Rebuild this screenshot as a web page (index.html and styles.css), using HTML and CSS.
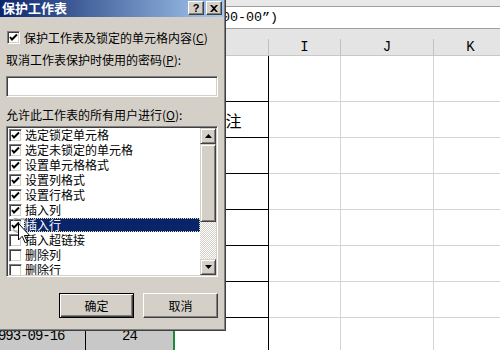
FILE: index.html
```html
<!DOCTYPE html>
<html lang="zh-CN">
<head>
    <meta charset="UTF-8">
    <title>保护工作表</title>
    <link rel="stylesheet" href="styles.css">
</head>
<body>
    <!-- Spreadsheet behind the dialog -->
    <div class="sheet">
        <div class="band"></div>
        <div class="formula">=TEXT(A2,"0000-00-00”)</div>
        <div class="grid">
            <div class="hd"><span>A</span></div>
            <div class="hd"><span>B</span></div>
            <div class="hd"><span>H</span></div>
            <div class="hd"><span>I</span></div>
            <div class="hd"><span>J</span></div>
            <div class="hd"><span>K</span></div>

            <div class="cell"></div><div class="cell"></div><div class="cell hb"></div>
            <div class="cell"></div><div class="cell"></div><div class="cell"></div>

            <div class="cell"></div><div class="cell"></div><div class="cell hb note">备注</div>
            <div class="cell"></div><div class="cell"></div><div class="cell"></div>

            <div class="cell"></div><div class="cell"></div><div class="cell hb"></div>
            <div class="cell"></div><div class="cell"></div><div class="cell"></div>

            <div class="cell"></div><div class="cell"></div><div class="cell hb"></div>
            <div class="cell"></div><div class="cell"></div><div class="cell"></div>

            <div class="cell"></div><div class="cell"></div><div class="cell hb"></div>
            <div class="cell"></div><div class="cell"></div><div class="cell"></div>

            <div class="cell"></div><div class="cell"></div><div class="cell hb"></div>
            <div class="cell"></div><div class="cell"></div><div class="cell"></div>

            <div class="cell"></div><div class="cell"></div><div class="cell hb"></div>
            <div class="cell"></div><div class="cell"></div><div class="cell"></div>

            <div class="cell fill date">1993-09-16</div><div class="cell fill num sel">24</div><div class="cell hb"></div>
            <div class="cell"></div><div class="cell"></div><div class="cell"></div>
        </div>
    </div>

    <!-- Protect sheet dialog -->
    <div class="dialog">
        <div class="titlebar">
            <span class="title">保护工作表</span>
            <span class="tbtn help">?</span>
            <span class="tbtn close">
                <svg width="8" height="7" viewBox="0 0 8 7"><path d="M0 0h2l2 2 2-2h2L5 3.5 8 7H6L4 5 2 7H0l3-3.5z" fill="#000"/></svg>
            </span>
        </div>
        <div class="body">
            <div class="row first">
                <span class="chk"><svg width="9" height="9" viewBox="0 0 9 9"><polyline points="1,4 3,6.5 8,1.5" fill="none" stroke="#000" stroke-width="2"/></svg></span>
                <span>保护工作表及锁定的单元格内容(<u>C</u>)</span>
            </div>
            <div class="label">取消工作表保护时使用的密码(<u>P</u>):</div>
            <div class="input"></div>
            <div class="label allow">允许此工作表的所有用户进行(<u>O</u>):</div>
            <div class="list">
                <div class="items">
                    <div class="item"><span class="chk"><svg width="9" height="9" viewBox="0 0 9 9"><polyline points="1,4 3,6.5 8,1.5" fill="none" stroke="#000" stroke-width="2"/></svg></span><span class="txt">选定锁定单元格</span></div>
                    <div class="item"><span class="chk"><svg width="9" height="9" viewBox="0 0 9 9"><polyline points="1,4 3,6.5 8,1.5" fill="none" stroke="#000" stroke-width="2"/></svg></span><span class="txt">选定未锁定的单元格</span></div>
                    <div class="item"><span class="chk"><svg width="9" height="9" viewBox="0 0 9 9"><polyline points="1,4 3,6.5 8,1.5" fill="none" stroke="#000" stroke-width="2"/></svg></span><span class="txt">设置单元格格式</span></div>
                    <div class="item"><span class="chk"><svg width="9" height="9" viewBox="0 0 9 9"><polyline points="1,4 3,6.5 8,1.5" fill="none" stroke="#000" stroke-width="2"/></svg></span><span class="txt">设置列格式</span></div>
                    <div class="item"><span class="chk"><svg width="9" height="9" viewBox="0 0 9 9"><polyline points="1,4 3,6.5 8,1.5" fill="none" stroke="#000" stroke-width="2"/></svg></span><span class="txt">设置行格式</span></div>
                    <div class="item"><span class="chk"><svg width="9" height="9" viewBox="0 0 9 9"><polyline points="1,4 3,6.5 8,1.5" fill="none" stroke="#000" stroke-width="2"/></svg></span><span class="txt">插入列</span></div>
                    <div class="item"><span class="chk"><svg width="9" height="9" viewBox="0 0 9 9"><polyline points="1,4 3,6.5 8,1.5" fill="none" stroke="#000" stroke-width="2"/></svg></span><span class="txt selected">插入行</span></div>
                    <div class="item"><span class="chk"></span><span class="txt">插入超链接</span></div>
                    <div class="item"><span class="chk"></span><span class="txt">删除列</span></div>
                    <div class="item"><span class="chk"></span><span class="txt">删除行</span></div>
                </div>
                <div class="scrollbar">
                    <div class="sbtn"><svg width="7" height="4" viewBox="0 0 7 4"><path d="M3.5 0L7 4H0z" fill="#000"/></svg></div>
                    <div class="thumb"></div>
                    <div class="track"></div>
                    <div class="sbtn"><svg width="7" height="4" viewBox="0 0 7 4"><path d="M0 0h7L3.5 4z" fill="#000"/></svg></div>
                </div>
            </div>
            <div class="buttons">
                <button class="btn default">确定</button>
                <button class="btn">取消</button>
            </div>
        </div>
    </div>

    <!-- mouse pointer with click ring -->
    <svg class="cursor" width="24" height="32" viewBox="0 0 24 32">
        <circle cx="6" cy="7" r="7.5" fill="none" stroke="#a8a8a8" stroke-width="1.5"/>
        <path d="M5.5 5.5V22l3.7-3.7 3 6.5 2.2-1-3-6.3h5.3z" fill="#fff" stroke="#000" stroke-width="1"/>
    </svg>
</body>
</html>
```

FILE: styles.css
```css
body {
    margin: 0;
    width: 500px;
    height: 350px;
    overflow: hidden;
    position: relative;
    background-color: #fff;
    font-family: "Noto Sans CJK SC", sans-serif;
}

/* ---------- spreadsheet ---------- */

.band {
    height: 6px;
    background-color: #e8e8e8;
    border-bottom: 1px solid #a0a0a0;
}

.formula {
    height: 21px;
    line-height: 21px;
    padding-left: 102px;
    border-bottom: 1px solid #a0a0a0;
    font-family: "Liberation Mono", monospace;
    font-size: 13.33px;
    white-space: nowrap;
}

.grid {
    display: grid;
    margin-left: -30px;
    width: 538px;
    grid-template-columns: 116px 89px 94px 72px 93px 74px;
    grid-template-rows: 27px 46px repeat(7, 36px);
}

.hd {
    background-color: #e4e4e4;
    padding-top: 10px;
    box-sizing: border-box;
    border-bottom: 1px solid #c8c8c8;
}

.hd span {
    display: block;
    height: 16px;
    line-height: 16px;
    text-align: center;
    border-right: 1px solid #c0c0c0;
    font-family: "Liberation Mono", monospace;
    font-size: 14px;
}

.cell {
    box-sizing: border-box;
    border-right: 1px solid #d4d4d4;
    border-bottom: 1px solid #d4d4d4;
    display: flex;
    align-items: center;
    justify-content: center;
}

.cell.hb {
    border-right: 1px solid #000;
    border-bottom: 1px solid #000;
}

.note {
    font-size: 16px;
    padding-left: 8px;
}

.fill {
    background-color: #c8c8c8;
}

.date, .num {
    font-family: "Liberation Mono", monospace;
    font-size: 14px;
    letter-spacing: -1px;
}

.date {
    border-right: 1px solid #000;
}

.sel {
    border-right: 2px solid #1e8a3c;
}

/* ---------- dialog ---------- */

.dialog {
    position: absolute;
    left: -3px;
    top: -3px;
    width: 229px;
    height: 334px;
    box-sizing: border-box;
    padding: 1px;
    background-color: #d4d0c8;
    border: 1px solid;
    border-color: #d4d0c8 #404040 #404040 #d4d0c8;
    box-shadow: inset 1px 1px #fff, inset -1px -1px #808080;
    font-size: 12px;
    color: #000;
}

.titlebar {
    display: flex;
    align-items: center;
    height: 18px;
    padding: 0 2px 0 3px;
    background: linear-gradient(to right, #0a246a, #a6caf0);
}

.title {
    flex: 1;
    color: #fff;
    font-weight: bold;
    font-size: 13px;
    line-height: 18px;
}

.tbtn {
    width: 16px;
    height: 14px;
    box-sizing: border-box;
    display: flex;
    align-items: center;
    justify-content: center;
    background-color: #d4d0c8;
    border: 1px solid;
    border-color: #fff #404040 #404040 #fff;
    box-shadow: inset -1px -1px #808080;
    font-family: "Liberation Sans", sans-serif;
    font-weight: bold;
    font-size: 11px;
    line-height: 12px;
}

.help {
    margin-right: 2px;
}

.body {
    padding: 0 6px 0 7px;
}

.row {
    display: flex;
    align-items: center;
    gap: 4px;
    height: 13px;
    line-height: 13px;
    margin-left: 1px;
    white-space: nowrap;
}

.row.first {
    margin-top: 14px;
}

.chk {
    width: 13px;
    height: 13px;
    flex: none;
    box-sizing: border-box;
    display: flex;
    align-items: center;
    justify-content: center;
    background-color: #fff;
    border: 1px solid;
    border-color: #808080 #fff #fff #808080;
    box-shadow: inset 1px 1px #404040, inset -1px -1px #d4d0c8;
}

.label {
    margin-top: 9px;
    height: 13px;
    line-height: 13px;
    white-space: nowrap;
}

.label.allow {
    margin-top: 11px;
}

.input, .list {
    box-sizing: border-box;
    background-color: #fff;
    border: 1px solid;
    border-color: #808080 #fff #fff #808080;
    box-shadow: inset 1px 1px #404040, inset -1px -1px #d4d0c8;
}

.input {
    margin-top: 10px;
    height: 21px;
}

.list {
    margin-top: 5px;
    height: 151px;
    padding: 1px;
    display: flex;
    overflow: hidden;
}

.items {
    flex: 1;
    overflow: hidden;
}

.item {
    display: flex;
    height: 15px;
    padding-left: 1px;
}

.item .chk {
    margin-top: 1px;
}

.txt {
    flex: 1;
    margin-left: 2px;
    height: 14px;
    line-height: 14px;
    padding-left: 1px;
    white-space: nowrap;
    box-sizing: border-box;
}

.txt.selected {
    background-color: #0a246a;
    color: #fff;
    outline: 1px dotted #e8e0a0;
    outline-offset: -1px;
}

.scrollbar {
    width: 16px;
    flex: none;
    display: flex;
    flex-direction: column;
}

.sbtn, .thumb {
    box-sizing: border-box;
    background-color: #d4d0c8;
    border: 1px solid;
    border-color: #d4d0c8 #404040 #404040 #d4d0c8;
    box-shadow: inset 1px 1px #fff, inset -1px -1px #808080;
}

.sbtn {
    height: 16px;
    display: flex;
    align-items: center;
    justify-content: center;
}

.thumb {
    height: 78px;
}

.track {
    height: 37px;
    background: repeating-conic-gradient(#d4d0c8 0 25%, #fff 0 50%);
    background-size: 2px 2px;
}

.buttons {
    display: flex;
    justify-content: flex-end;
    gap: 9px;
    margin-top: 16px;
}

.btn {
    width: 75px;
    height: 25px;
    padding: 0;
    box-sizing: border-box;
    background-color: #d4d0c8;
    border: 1px solid;
    border-color: #fff #404040 #404040 #fff;
    box-shadow: inset -1px -1px #808080;
    font-family: "Noto Sans CJK SC", sans-serif;
    font-size: 12px;
    color: #000;
}

.btn.default {
    border: 1px solid #000;
    box-shadow: inset 1px 1px #fff, inset -1px -1px #404040, inset -2px -2px #808080;
}

/* ---------- pointer ---------- */

.cursor {
    position: absolute;
    left: 13px;
    top: 218px;
}
```
